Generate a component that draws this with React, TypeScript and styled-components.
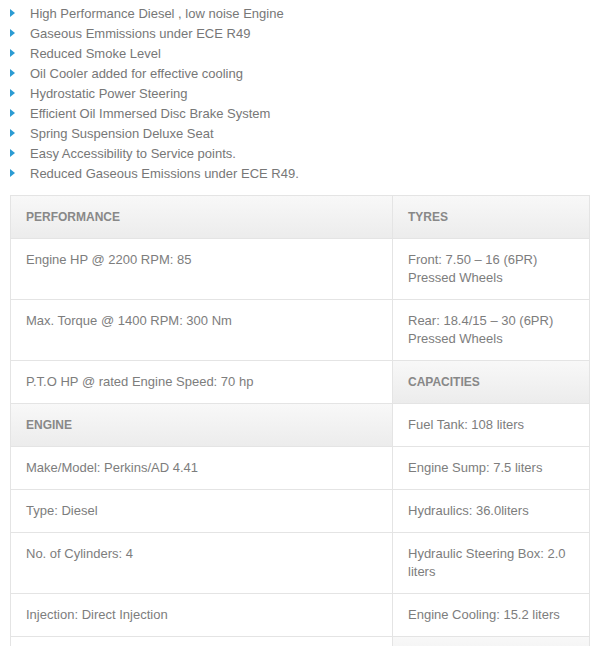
import React from "react";
import styled, { createGlobalStyle } from "styled-components";

const Global = createGlobalStyle`
  html, body { margin: 0; padding: 0; background: #fff; }
  body { font-family: "Liberation Sans", Arial, sans-serif; overflow: hidden; }
`;

const Page = styled.div`
  padding: 3px 0 0 10px;
  width: 580px;
`;

const List = styled.ul`
  list-style: none;
  margin: 0 0 12px 0;
  padding: 0;
`;

const Item = styled.li`
  display: flex;
  align-items: center;
  height: 20px;
  font-size: 13px;
  color: #777;
`;

const Marker = styled.span`
  width: 0;
  height: 0;
  border-left: 5px solid #2b9bd3;
  border-top: 4px solid transparent;
  border-bottom: 4px solid transparent;
  margin-right: 15px;
  flex: none;
`;

const Table = styled.div`
  display: grid;
  grid-template-columns: 382px 197px;
  border-top: 1px solid #e4e4e4;
  border-right: 1px solid #e4e4e4;
`;

const Cell = styled.div<{ $head?: boolean }>`
  border-left: 1px solid #e4e4e4;
  border-bottom: 1px solid #e4e4e4;
  padding: 12px 15px;
  min-height: 18px;
  line-height: 18px;
  font-size: ${(p) => (p.$head ? "12px" : "13px")};
  font-weight: ${(p) => (p.$head ? "bold" : "normal")};
  color: ${(p) => (p.$head ? "#888" : "#7d7d7d")};
  background: ${(p) =>
    p.$head ? "linear-gradient(#f8f8f8, #ececec)" : "#fff"};
  text-transform: ${(p) => (p.$head ? "uppercase" : "none")};
`;

const features = [
  "High Performance Diesel , low noise Engine",
  "Gaseous Emmissions under ECE R49",
  "Reduced Smoke Level",
  "Oil Cooler added for effective cooling",
  "Hydrostatic Power Steering",
  "Efficient Oil Immersed Disc Brake System",
  "Spring Suspension Deluxe Seat",
  "Easy Accessibility to Service points.",
  "Reduced Gaseous Emissions under ECE R49.",
];

type C = { text?: React.ReactNode; head?: boolean };
const rows: [C, C][] = [
  [{ text: "Performance", head: true }, { text: "Tyres", head: true }],
  [
    { text: "Engine HP @ 2200 RPM: 85" },
    { text: <>Front: 7.50 – 16 (6PR)<br />Pressed Wheels</> },
  ],
  [
    { text: "Max. Torque @ 1400 RPM: 300 Nm" },
    { text: <>Rear: 18.4/15 – 30 (6PR)<br />Pressed Wheels</> },
  ],
  [
    { text: "P.T.O HP @ rated Engine Speed: 70 hp" },
    { text: "Capacities", head: true },
  ],
  [{ text: "Engine", head: true }, { text: "Fuel Tank: 108 liters" }],
  [{ text: "Make/Model: Perkins/AD 4.41" }, { text: "Engine Sump: 7.5 liters" }],
  [{ text: "Type: Diesel" }, { text: "Hydraulics: 36.0liters" }],
  [
    { text: "No. of Cylinders: 4" },
    { text: "Hydraulic Steering Box: 2.0 liters" },
  ],
  [
    { text: "Injection: Direct Injection" },
    { text: "Engine Cooling: 15.2 liters" },
  ],
  [{}, { head: true }],
];

export default function App() {
  return (
    <>
      <Global />
      <Page>
        <List>
          {features.map((f) => (
            <Item key={f}>
              <Marker />
              {f}
            </Item>
          ))}
        </List>
        <Table>
          {rows.map((r, i) =>
            r.map((c, j) => (
              <Cell key={`${i}-${j}`} $head={c.head}>
                {c.text}
              </Cell>
            ))
          )}
        </Table>
      </Page>
    </>
  );
}
